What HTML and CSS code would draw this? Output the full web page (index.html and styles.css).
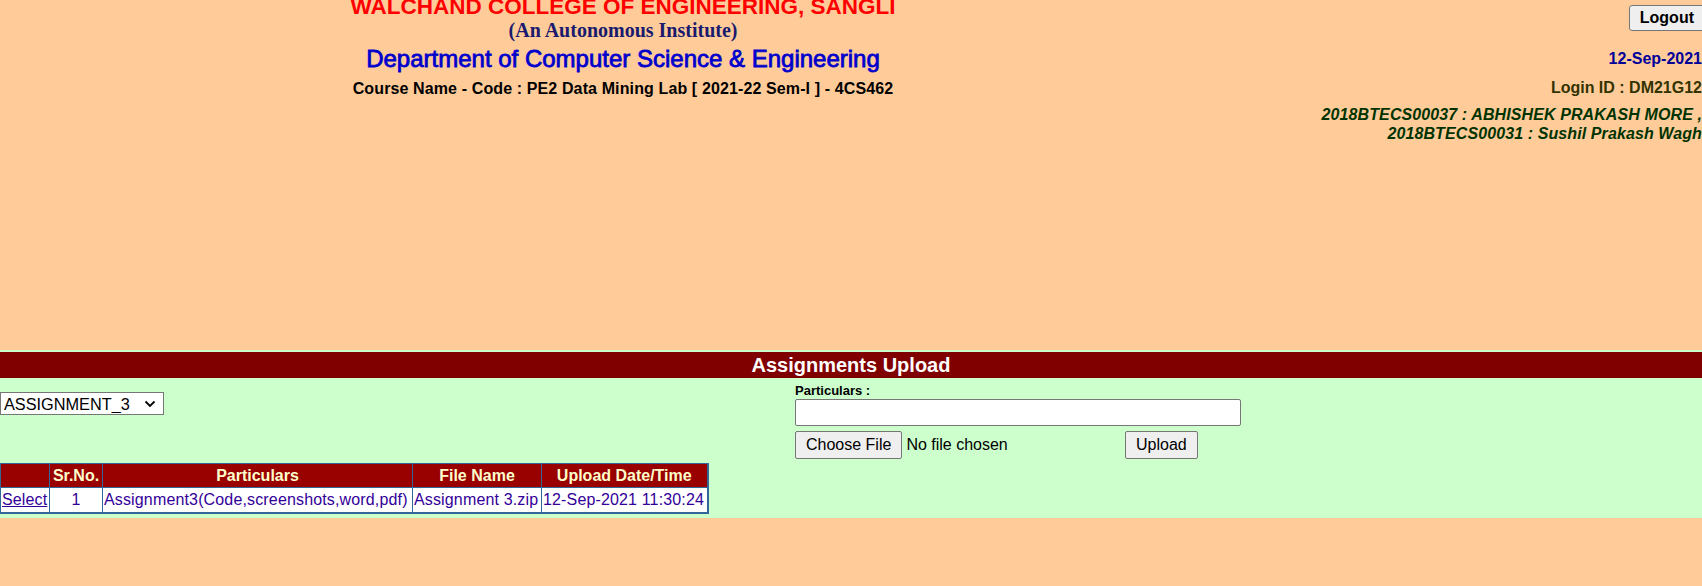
FILE: index.html
```html
<!DOCTYPE html>
<html>
<head>
<meta charset="utf-8">
<title>Assignments Upload</title>
<link rel="stylesheet" href="styles.css">
</head>
<body>
<header class="top">
  <div class="brand">
    <div class="college">WALCHAND COLLEGE OF ENGINEERING, SANGLI</div>
    <div class="auto">(An Autonomous Institute)</div>
    <div class="dept">Department of Computer Science &amp; Engineering</div>
    <div class="course">Course Name - Code : PE2 Data Mining Lab [ 2021-22 Sem-I ] - 4CS462</div>
  </div>
  <div class="user">
    <div class="logout-row"><button class="logout" type="button">Logout</button></div>
    <div class="date">12-Sep-2021</div>
    <div class="login">Login ID : DM21G12</div>
    <div class="students">2018BTECS00037 : ABHISHEK PRAKASH MORE ,<br>2018BTECS00031 : Sushil Prakash Wagh</div>
  </div>
</header>
<section class="upload">
  <div class="bar">Assignments Upload</div>
  <div class="form-row">
    <div class="pick">
      <div class="select-wrap">
        <select class="assign">
          <option>ASSIGNMENT_3</option>
        </select>
        <svg class="chev" width="12" height="8" viewBox="0 0 12 8" aria-hidden="true"><path d="M1.5 1.5 L6 6 L10.5 1.5" fill="none" stroke="#000" stroke-width="1.8"/></svg>
      </div>
    </div>
    <div class="fields">
      <label class="lbl">Particulars :</label>
      <input type="text" class="txt">
      <div class="file-row">
        <input type="file" class="file">
        <button class="btn" type="button">Upload</button>
      </div>
    </div>
  </div>
  <table class="grid">
    <colgroup>
      <col class="c1"><col class="c2"><col class="c3"><col class="c4"><col class="c5">
    </colgroup>
    <thead>
      <tr><th></th><th>Sr.No.</th><th>Particulars</th><th>File Name</th><th>Upload Date/Time</th></tr>
    </thead>
    <tbody>
      <tr><td><a href="#" class="sel">Select</a></td><td class="num">1</td><td>Assignment3(Code,screenshots,word,pdf)</td><td>Assignment 3.zip</td><td>12-Sep-2021 11:30:24</td></tr>
    </tbody>
  </table>
</section>
</body>
</html>
```

FILE: styles.css
```css
html, body {
  margin: 0;
  padding: 0;
  overflow: hidden;
}
body {
  background: #ffcc99;
  font-family: "Liberation Sans", Arial, sans-serif;
  color: #000;
  width: 1702px;
}
.top {
  display: grid;
  grid-template-columns: 1246px 1fr;
  margin-top: -5px;
  height: 355px;
}
.brand {
  text-align: center;
  font-weight: bold;
}
.college {
  color: #ff0000;
  font-size: 22.5px;
  line-height: 24px;
}
.auto {
  font-family: "Liberation Serif", "Times New Roman", serif;
  color: #1a1a6e;
  font-size: 20px;
  line-height: 22px;
}
.dept {
  color: #0000cc;
  font-size: 24px;
  font-weight: normal;
  -webkit-text-stroke: 0.8px #0000cc;
  line-height: 36px;
}
.course {
  font-size: 16px;
  line-height: 24px;
  letter-spacing: 0.12px;
}
.user {
  text-align: right;
  font-weight: bold;
  font-size: 16px;
}
.logout-row {
  padding-top: 10px;
  line-height: 0;
}
.logout {
  font-family: "Liberation Sans", Arial, sans-serif;
  font-weight: bold;
  font-size: 16px;
  height: 26px;
  padding: 0 10px;
  margin-right: -3px;
  background: #efefef;
  border: 1px solid #767676;
  border-radius: 3px;
  color: #000;
}
.date {
  color: #000099;
  line-height: 20px;
  margin-top: 18px;
}
.login {
  color: #333300;
  line-height: 20px;
  margin-top: 9px;
}
.students {
  color: #003300;
  font-style: italic;
  line-height: 19px;
  margin-top: 7px;
  letter-spacing: 0.1px;
}
.upload {
  background: #ccffcc;
  padding: 2px 0 4px;
}
.bar {
  background: #800000;
  color: #fff;
  font-weight: bold;
  font-size: 20px;
  line-height: 26px;
  height: 26px;
  text-align: center;
}
.form-row {
  display: flex;
}
.pick {
  width: 795px;
  padding-top: 14px;
}
.select-wrap {
  position: relative;
  width: 164px;
  height: 23px;
}
.assign {
  -webkit-appearance: none;
  appearance: none;
  box-sizing: border-box;
  width: 164px;
  height: 23px;
  padding: 0 0 0 3px;
  font-family: "Liberation Sans", Arial, sans-serif;
  font-size: 16.3px;
  margin: 0;
  background: #fff;
  border: 1px solid #767676;
  border-radius: 0;
  color: #000;
}
.chev {
  position: absolute;
  right: 8px;
  top: 8px;
  pointer-events: none;
}
.fields {
  padding-top: 5px;
}
.lbl {
  display: block;
  font-weight: bold;
  font-size: 13px;
  line-height: 16px;
}
.txt {
  display: block;
  box-sizing: border-box;
  width: 446px;
  height: 27px;
  margin: 0;
  border: 1px solid #767676;
  border-radius: 2px;
  background: #fff;
}
.file-row {
  display: flex;
  align-items: center;
  margin-top: 5px;
  height: 28px;
}
.file {
  width: 326px;
  margin: 0 4px 0 0;
  font-family: "Liberation Sans", Arial, sans-serif;
  font-size: 16px;
  color: #000;
}
.file::file-selector-button {
  font-family: "Liberation Sans", Arial, sans-serif;
  font-size: 16px;
  height: 28px;
  padding: 0 10px;
  margin-right: 4px;
  background: #efefef;
  border: 1px solid #767676;
  border-radius: 2px;
  color: #000;
}
.btn {
  font-family: "Liberation Sans", Arial, sans-serif;
  font-size: 16px;
  height: 28px;
  padding: 0 10px;
  margin: 0;
  background: #efefef;
  border: 1px solid #767676;
  border-radius: 2px;
  color: #000;
}
.grid {
  margin-top: 4px;
  width: 707px;
  table-layout: fixed;
  border-collapse: collapse;
  border: 1px solid #336699;
  border-right-width: 2px;
  border-bottom-width: 2px;
  font-size: 16px;
}
.c1 { width: 49px; }
.c2 { width: 53px; }
.c3 { width: 310px; }
.c4 { width: 129px; }
.c5 { width: 166px; }
.grid th {
  background: #990000;
  color: #ffffcc;
  font-weight: bold;
  border: 1px solid #336699;
  line-height: 23px;
  padding: 0;
  text-align: center;
  white-space: nowrap;
}
.grid td {
  background: #fff;
  color: #330099;
  border: 1px solid #336699;
  line-height: 24px;
  padding: 0 1px;
  white-space: nowrap;
  overflow: hidden;
  letter-spacing: 0.15px;
}
.grid td.num {
  text-align: center;
}
.sel {
  color: #330099;
  text-decoration: underline;
}
```
